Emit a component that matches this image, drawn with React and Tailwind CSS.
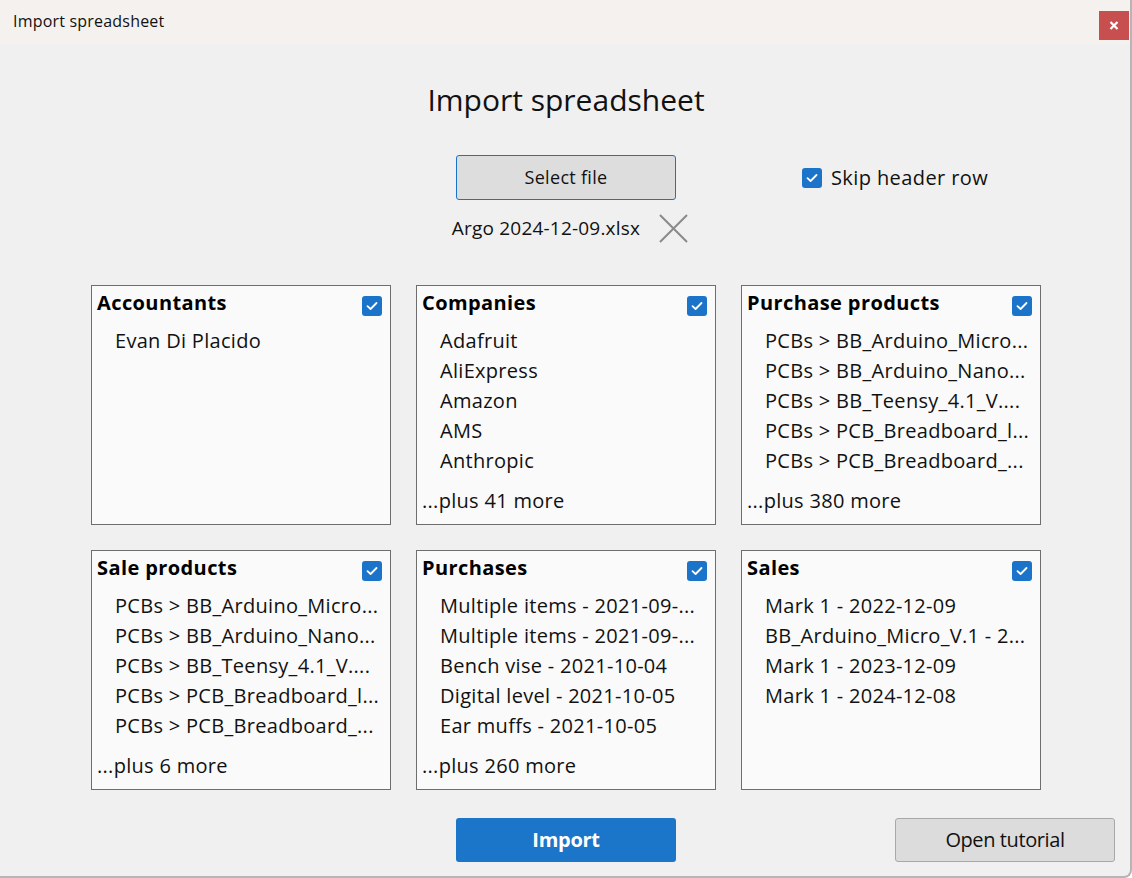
import React from "react";

const font = { fontFamily: '"Open Sans", "Noto Sans", sans-serif' };

function Check() {
  return (
    <div className="w-[20px] h-[20px] rounded-[3px] bg-[#1b74c9] flex items-center justify-center shrink-0">
      <svg width="12" height="10" viewBox="0 0 12 10">
        <path d="M1.5 5.2 L4.6 8 L10.5 2" fill="none" stroke="white" strokeWidth="1.8" strokeLinecap="round" strokeLinejoin="round" />
      </svg>
    </div>
  );
}

function Card({ title, items, more }) {
  return (
    <div className="w-[300px] h-[240px] border border-[#6e6e6e] bg-[#fafafa] flex flex-col pl-[5px] pr-[8px] overflow-hidden">
      <div className="flex justify-between items-start pt-[3px]">
        <div className="text-[20px] leading-[28px] font-bold text-black tracking-[0.4px]">{title}</div>
        <div className="mt-[7px]"><Check /></div>
      </div>
      <div className="pl-[18px] mt-[9px]">
        {items.map((t, i) => (
          <div key={i} className="text-[20px] leading-[30px] text-[#111] whitespace-nowrap tracking-[0.3px]">{t}</div>
        ))}
      </div>
      {more && (
        <div className="text-[20px] leading-[30px] text-[#111] mt-[10px] tracking-[0.3px]">{more}</div>
      )}
    </div>
  );
}

const pcb = [
  "PCBs > BB_Arduino_Micro...",
  "PCBs > BB_Arduino_Nano...",
  "PCBs > BB_Teensy_4.1_V....",
  "PCBs > PCB_Breadboard_l...",
  "PCBs > PCB_Breadboard_...",
];

export default function App() {
  return (
    <div style={font} className="w-[1132px] h-[878px] bg-[#f0f0f0] border-r-2 border-b-2 border-[#b5b5b5] rounded-br-[8px] flex flex-col overflow-hidden">
      <div className="h-[44px] bg-[#f4f1ef] flex justify-between shrink-0">
        <div className="pl-[13px] pt-[10px] text-[16px] leading-[22px] text-[#111] tracking-[0.2px]">Import spreadsheet</div>
        <div className="mt-[11px] mr-[1px] w-[30px] h-[29px] bg-[#c84f4f] flex items-center justify-center">
          <svg width="10" height="9" viewBox="0 0 10 9">
            <path d="M1.5 1 L8.5 8 M8.5 1 L1.5 8" stroke="white" strokeWidth="2.2" />
          </svg>
        </div>
      </div>

      <div className="mt-[36px] pl-[2px] text-center text-[30px] leading-[40px] text-[#111]">Import spreadsheet</div>

      <div className="mt-[35px] pl-[2px] grid grid-cols-[1fr_220px_1fr]">
        <div />
        <div className="h-[45px] bg-[#dddddd] border border-[#1a73c8] rounded-[3px] flex items-center justify-center text-[18px] text-[#111] tracking-[0.3px]">Select file</div>
        <div className="flex items-center pl-[126px] gap-[9px]">
          <Check />
          <span className="text-[20px] text-[#111] tracking-[0.4px]">Skip header row</span>
        </div>
      </div>

      <div className="mt-[13px] flex justify-center items-center gap-[19px] pl-[10px]">
        <span className="text-[19px] leading-[30px] text-[#111] tracking-[0.2px]">Argo 2024-12-09.xlsx</span>
        <svg width="29" height="29" viewBox="0 0 29 29">
          <path d="M1 1 L28 28 M28 1 L1 28" stroke="#8a8a8a" strokeWidth="2" />
        </svg>
      </div>

      <div className="mt-[42px] pl-[2px] grid grid-cols-[300px_300px_300px] gap-[25px] justify-center">
        <Card title="Accountants" items={["Evan Di Placido"]} />
        <Card title="Companies" items={["Adafruit", "AliExpress", "Amazon", "AMS", "Anthropic"]} more="...plus 41 more" />
        <Card title="Purchase products" items={pcb} more="...plus 380 more" />
        <Card title="Sale products" items={pcb} more="...plus 6 more" />
        <Card
          title="Purchases"
          items={[
            "Multiple items - 2021-09-...",
            "Multiple items - 2021-09-...",
            "Bench vise - 2021-10-04",
            "Digital level - 2021-10-05",
            "Ear muffs - 2021-10-05",
          ]}
          more="...plus 260 more"
        />
        <Card
          title="Sales"
          items={["Mark 1 - 2022-12-09", "BB_Arduino_Micro_V.1 - 2...", "Mark 1 - 2023-12-09", "Mark 1 - 2024-12-08"]}
        />
      </div>

      <div className="mt-[28px] pl-[2px] grid grid-cols-[1fr_220px_1fr]">
        <div />
        <div className="h-[44px] bg-[#1b75c9] rounded-[3px] flex items-center justify-center text-[20px] font-bold text-white tracking-[-0.3px]">Import</div>
        <div className="flex justify-end pr-[15px]">
          <div className="w-[220px] h-[44px] bg-[#dcdcdc] border border-[#a8a8a8] rounded-[3px] flex items-center justify-center text-[20px] text-[#111] tracking-[-0.4px]">Open tutorial</div>
        </div>
      </div>
    </div>
  );
}
